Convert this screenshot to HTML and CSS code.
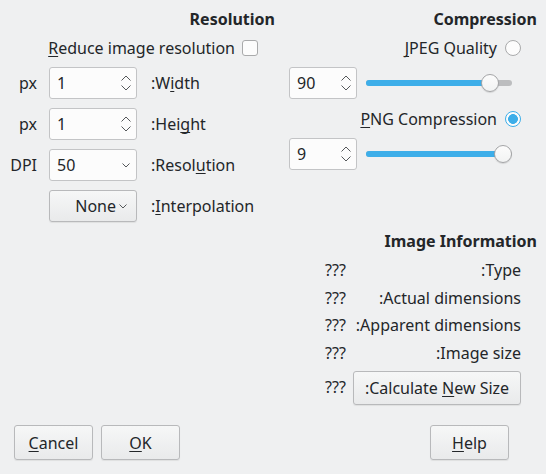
FILE: index.html
```html
<!DOCTYPE html>
<html>
<head>
<meta charset="utf-8">
<link rel="stylesheet" href="styles.css">
</head>
<body>
<div class="dialog">
  <div class="main">
    <section class="res">
      <h2 class="title">Resolution</h2>
      <div class="check-row"><span><u>R</u>educe image resolution</span><span class="checkbox"></span></div>
      <div class="res-grid">
        <span class="unit">px</span>
        <div class="field spin"><span>1</span><svg class="spin-arrows" width="10" height="16" viewBox="0 0 10 16"><polyline points="0.5,5.5 5,1 9.5,5.5"/><polyline points="0.5,10.5 5,15 9.5,10.5"/></svg></div>
        <span class="lbl">:W<u>i</u>dth</span>

        <span class="unit">px</span>
        <div class="field spin"><span>1</span><svg class="spin-arrows" width="10" height="16" viewBox="0 0 10 16"><polyline points="0.5,5.5 5,1 9.5,5.5"/><polyline points="0.5,10.5 5,15 9.5,10.5"/></svg></div>
        <span class="lbl">:Hei<u>g</u>ht</span>

        <span class="unit">DPI</span>
        <div class="field spin"><span>50</span><svg class="combo-arrow" width="8" height="5" viewBox="0 0 8 5"><polyline points="0.5,0.5 4,4 7.5,0.5"/></svg></div>
        <span class="lbl">:Resol<u>u</u>tion</span>

        <span class="unit"></span>
        <div class="btn combo-btn"><span>None</span><svg class="combo-arrow" width="8" height="5" viewBox="0 0 8 5"><polyline points="0.5,0.5 4,4 7.5,0.5"/></svg></div>
        <span class="lbl">:<u>I</u>nterpolation</span>
      </div>
    </section>

    <section class="right">
      <h2 class="title">Compression</h2>
      <div class="radio-row first"><span><u>J</u>PEG Quality</span><span class="radio"></span></div>
      <div class="slider-row">
        <div class="field spin small"><span>90</span><svg class="spin-arrows" width="10" height="16" viewBox="0 0 10 16"><polyline points="0.5,5.5 5,1 9.5,5.5"/><polyline points="0.5,10.5 5,15 9.5,10.5"/></svg></div>
        <div class="slider" style="--pos: 0.9"><div class="groove"><div class="fill"></div></div><div class="handle"></div></div>
      </div>
      <div class="radio-row second"><span><u>P</u>NG Compression</span><span class="radio checked"></span></div>
      <div class="slider-row">
        <div class="field spin small"><span>9</span><svg class="spin-arrows" width="10" height="16" viewBox="0 0 10 16"><polyline points="0.5,5.5 5,1 9.5,5.5"/><polyline points="0.5,10.5 5,15 9.5,10.5"/></svg></div>
        <div class="slider" style="--pos: 1"><div class="groove"><div class="fill"></div></div><div class="handle"></div></div>
      </div>

      <h2 class="title info-title">Image Information</h2>
      <div class="info-grid">
        <span class="val">???</span><span class="ilbl">:Type</span>
        <span class="val">???</span><span class="ilbl">:Actual dimensions</span>
        <span class="val">???</span><span class="ilbl">:Apparent dimensions</span>
        <span class="val">???</span><span class="ilbl">:Image size</span>
        <span class="val">???</span><div class="btn calc"><span>:Calculate <u>N</u>ew Size</span></div>
      </div>
    </section>
  </div>

  <div class="buttons">
    <div class="btn dlg"><span><u>C</u>ancel</span></div>
    <div class="btn dlg"><span><u>O</u>K</span></div>
    <div class="spacer"></div>
    <div class="btn dlg"><span><u>H</u>elp</span></div>
  </div>
</div>
</body>
</html>
```

FILE: styles.css
```css
* { box-sizing: border-box; }

html, body {
  margin: 0;
  padding: 0;
  background: #eff0f1;
}

body {
  font-family: "Noto Sans", "DejaVu Sans", sans-serif;
  font-size: 16px;
  color: #232629;
}

u {
  text-decoration: underline;
  text-decoration-thickness: 1px;
  text-underline-offset: 2px;
  text-decoration-skip-ink: none;
}

.dialog {
  width: 546px;
  height: 474px;
  padding: 9px 9px 14px 9px;
  display: flex;
  flex-direction: column;
}

.main {
  display: flex;
  gap: 14px;
}

.title {
  margin: 0;
  font-size: 16px;
  font-weight: bold;
  line-height: 20px;
  height: 20px;
  text-align: right;
  white-space: nowrap;
}

/* Left: Resolution */
.res {
  width: 266px;
  display: flex;
  flex-direction: column;
}

.check-row {
  margin-top: 9px;
  height: 20px;
  display: flex;
  align-items: center;
  justify-content: flex-end;
  gap: 7px;
  padding-right: 17px;
  line-height: 20px;
  white-space: nowrap;
}

.checkbox {
  flex: none;
  width: 16px;
  height: 16px;
  border: 1px solid #a9aaab;
  border-radius: 3px;
  background: #fcfcfc;
}

.res-grid {
  margin-top: 9px;
  display: grid;
  grid-template-columns: 28px 88px auto;
  grid-auto-rows: 32px;
  column-gap: 12px;
  row-gap: 9px;
  align-items: center;
}

.unit {
  text-align: right;
  line-height: 20px;
  white-space: nowrap;
}

.lbl {
  margin-left: 2px;
  line-height: 20px;
  white-space: nowrap;
}

.field {
  height: 32px;
  border: 1px solid #c3c4c6;
  border-radius: 3px;
  background: #fcfcfc;
  display: flex;
  align-items: center;
  justify-content: space-between;
  padding: 0 5px 0 7px;
}

.spin-arrows polyline,
.combo-arrow polyline {
  fill: none;
  stroke: #55585b;
  stroke-width: 1;
}

.combo-arrow { margin-right: 1px; }

.btn {
  border: 1px solid #b8b9bb;
  border-radius: 3px;
  background: linear-gradient(#f6f7f7, #e9eaeb);
  box-shadow: 0 1px 1px rgba(0, 0, 0, 0.07);
  display: flex;
  align-items: center;
  justify-content: center;
  line-height: 20px;
  white-space: nowrap;
}

.combo-btn {
  height: 32px;
  justify-content: flex-end;
  gap: 3px;
  padding-right: 8px;
}

/* Right: Compression */
.right {
  width: 248px;
  display: flex;
  flex-direction: column;
}

.radio-row {
  height: 20px;
  display: flex;
  align-items: center;
  justify-content: flex-end;
  gap: 8px;
  padding-right: 16px;
  line-height: 20px;
  white-space: nowrap;
}

.radio-row.first { margin-top: 9px; }
.radio-row.second { margin-top: 10px; }

.radio {
  flex: none;
  width: 16px;
  height: 16px;
  border-radius: 50%;
  border: 1px solid #a9aaab;
  background: #fcfcfc;
}

.radio.checked {
  border-color: #3daee9;
  background: radial-gradient(circle, #3daee9 0 4.6px, #fcfcfc 5.2px);
}

.slider-row {
  margin-top: 9px;
  height: 32px;
  display: flex;
  align-items: center;
  gap: 9px;
}

.field.small {
  width: 68px;
}

.slider {
  position: relative;
  width: 146px;
  height: 20px;
}

.groove {
  position: absolute;
  left: 0;
  right: 0;
  top: 7px;
  height: 6px;
  border-radius: 3px;
  background: #bcbdbf;
  overflow: hidden;
}

.fill {
  height: 100%;
  width: calc(9px + var(--pos) * 128px);
  background: #3daee9;
}

.handle {
  position: absolute;
  top: 1px;
  left: calc(var(--pos) * 128px);
  width: 18px;
  height: 18px;
  border-radius: 50%;
  border: 1px solid #a4a5a7;
  background: linear-gradient(#fcfcfc, #f2f3f3);
  box-shadow: 0 1px 1px rgba(0, 0, 0, 0.12);
}

.info-title {
  margin-top: 61px;
}

.info-grid {
  margin-top: 9px;
  display: grid;
  grid-template-columns: 22px 168px;
  grid-template-rows: 20px 20px 20px 20px 34px;
  row-gap: 7.5px;
  column-gap: 6px;
  justify-content: end;
  padding-right: 16px;
  align-items: center;
  line-height: 20px;
}

.val { white-space: nowrap; }

.ilbl {
  justify-self: end;
  white-space: nowrap;
}

.calc {
  height: 34px;
  margin-top: 2px;
}

/* Bottom buttons */
.buttons {
  margin-top: auto;
  display: flex;
  gap: 8px;
  padding: 0 28px 0 5px;
}

.spacer { flex: 1; }

.btn.dlg {
  width: 79px;
  height: 35px;
}
```
